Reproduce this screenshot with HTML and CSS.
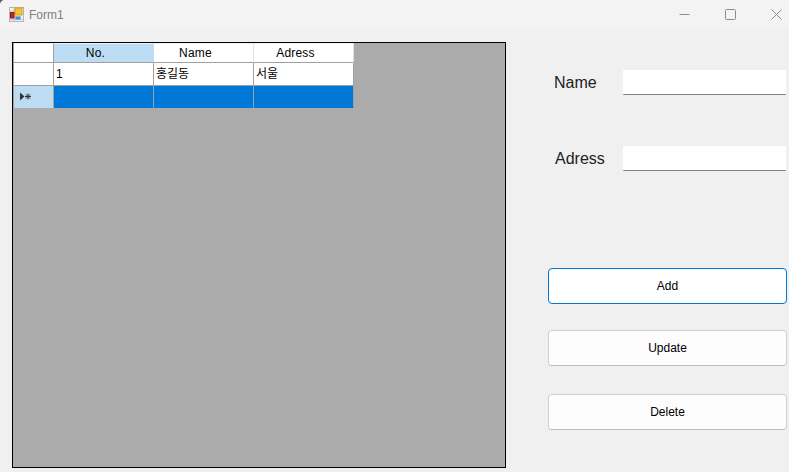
FILE: index.html
```html
<!DOCTYPE html>
<html lang="ko">
<head>
<meta charset="utf-8">
<title>Form1</title>
<link rel="stylesheet" href="styles.css">
</head>
<body>
<div class="window">
  <header class="titlebar">
    <svg class="app-icon" width="15" height="15" viewBox="0 0 15 15">
      <rect x="0.5" y="0.5" width="14" height="14" fill="#f4f4f4" stroke="#b4b4b4"/>
      <path d="M0 4h6M5 0v15M0 12.5h15" stroke="#c4c4c4" fill="none"/>
      <rect x="6" y="1" width="7" height="7" fill="#f4c534" stroke="#d19a1e"/>
      <rect x="1.5" y="5.5" width="3.5" height="5.5" fill="#d8201c" stroke="#8d1a1a"/>
      <rect x="6.5" y="9.5" width="5" height="3" fill="#4a86e0" stroke="#7fa9e6" stroke-width="0.5"/>
    </svg>
    <span class="title">Form1</span>
    <div class="caption-buttons">
      <svg class="caption" width="11" height="11" viewBox="0 0 11 11"><path d="M0.5 5.5h10" stroke="#8c8c8c" fill="none"/></svg>
      <svg class="caption" width="11" height="11" viewBox="0 0 11 11"><rect x="0.5" y="0.5" width="10" height="10" rx="1" stroke="#8c8c8c" fill="none"/></svg>
      <svg class="caption" width="11" height="11" viewBox="0 0 11 11"><path d="M0.5 0.5l10 10M10.5 0.5l-10 10" stroke="#8c8c8c" fill="none"/></svg>
    </div>
  </header>
  <main class="client">
    <section class="datagrid">
      <div class="table">
        <div class="cell head corner"></div>
        <div class="cell head sel">No.</div>
        <div class="cell head">Name</div>
        <div class="cell head">Adress</div>
        <div class="cell rowhead"></div>
        <div class="cell data">1</div>
        <div class="cell data">홍길동</div>
        <div class="cell data">서울</div>
        <div class="cell rowhead current">
          <svg class="row-glyph" width="13" height="9" viewBox="0 0 13 9"><path d="M1 0.5l4.5 4-4.5 4z" fill="#333"/><path d="M6 4.5h6M9 1.5v6M7 2.5l4 4M11 2.5l-4 4" stroke="#333" fill="none"/></svg>
        </div>
        <div class="cell blue"></div>
        <div class="cell blue"></div>
        <div class="cell blue"></div>
      </div>
    </section>
    <aside class="panel">
      <div class="field field-name">
        <label class="label">Name</label>
        <input class="input" type="text">
      </div>
      <div class="field field-adress">
        <label class="label">Adress</label>
        <input class="input" type="text">
      </div>
      <button class="btn btn-add">Add</button>
      <button class="btn btn-update">Update</button>
      <button class="btn btn-delete">Delete</button>
    </aside>
  </main>
</div>
</body>
</html>
```
FILE: styles.css
```css
* { box-sizing: border-box; }
html, body { margin: 0; padding: 0; height: 100%; background: #5a5a5a; overflow: hidden; }
body { font-family: "Liberation Sans", Arial, "Noto Sans CJK KR", sans-serif; color: #000; }

.window {
  width: 789px; height: 472px;
  display: flex; flex-direction: column;
  background: #f0f0f0;
  border-top-left-radius: 5px;
  overflow: hidden;
}

.titlebar {
  height: 29px; flex: none;
  display: flex; align-items: center;
  background: #f3f3f3;
  padding-left: 9px;
}
.app-icon { flex: none; }
.title { margin-left: 5px; font-size: 12px; color: #808080; }
.caption-buttons { margin-left: auto; display: flex; gap: 35px; padding-right: 7px; }
.caption { display: block; }

.client { flex: 1; display: flex; align-items: flex-start; padding: 13px 0 0 12px; }

.datagrid {
  width: 494px; height: 426px; flex: none;
  border: 1px solid #000;
  background: #ababab;
}
.table {
  display: grid;
  grid-template-columns: 40px 100px 100px 100px;
  grid-template-rows: 20px 23px 22px;
  width: 341px;
  border-left: 1px solid #a0a0a0;
}
.cell {
  font-size: 12px; line-height: 18px;
  display: flex; align-items: center;
  border-right: 1px solid #a0a0a0;
  border-bottom: 1px solid #a0a0a0;
  background: #fff;
}
.head { justify-content: center; padding-right: 16px; border-top: 1px solid #f0f0f0; border-right-color: #e3e3e3; letter-spacing: 0.2px; }
.corner { border-right-color: #a0a0a0; }
.sel { background: #bcdcf4; border-right-color: #bcdcf4; }
.data { padding-left: 2px; }
.rowhead { background: #fff; }
.current { background: #bcdcf4; padding-left: 5px; border-bottom-color: #bcdcf4; }
.row-glyph { display: block; }
.blue { background: #0078d7; border-bottom-color: #0078d7; }

.panel { width: 239px; margin-left: 42px; display: flex; flex-direction: column; flex: none; }

.field { display: flex; align-items: center; height: 25px; }
.field-name { margin-top: 28px; padding-left: 6px; }
.field-adress { margin-top: 51px; padding-left: 7px; }
.label { font-size: 16px; color: #222; }
.field-name .label { width: 69px; }
.field-adress .label { width: 68px; }
.input {
  width: 163px; height: 25px;
  border: 0; border-bottom: 1px solid #7f7f7f;
  background: #fff; padding: 0; outline: 0;
  border-radius: 1px;
}

.btn {
  width: 239px; height: 36px;
  font-family: inherit; font-size: 12px; color: #000;
  background: #fdfdfd;
  border: 1px solid #d0d0d0;
  border-bottom-color: #bcbcbc;
  border-radius: 4px;
  padding: 0;
}
.btn-add { margin-top: 97px; border-color: #0078d4; background: #fff; }
.btn-update { margin-top: 26px; }
.btn-delete { margin-top: 28px; }
```
